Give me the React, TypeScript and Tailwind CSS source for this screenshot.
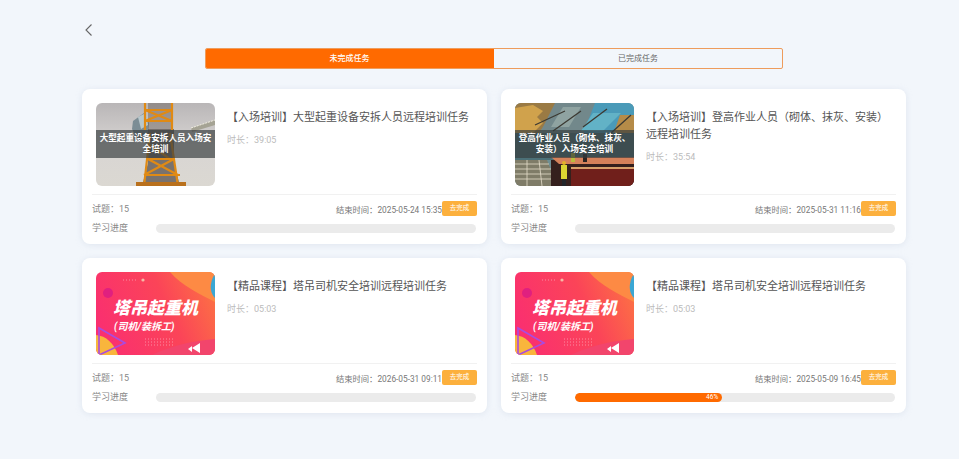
import React from "react";

const font = { fontFamily: 'Roboto, "Noto Sans CJK SC", sans-serif' };

function Crane() {
  return (
    <svg viewBox="0 0 119 83" className="absolute inset-0 w-full h-full" preserveAspectRatio="none">
      <defs>
        <linearGradient id="sky" x1="0" y1="0" x2="0" y2="1">
          <stop offset="0" stopColor="#b9b6b7" />
          <stop offset="0.5" stopColor="#d8d5d3" />
          <stop offset="1" stopColor="#dbd8d2" />
        </linearGradient>
      </defs>
      <rect width="119" height="83" fill="url(#sky)" />
      <path d="M37 18l11-8 5 10-2 20-10-4-5-10z" fill="#7c8d95" />
      <path d="M42 14l8-4 2 12-7 4z" fill="#b8c7cc" />
      <path d="M95 25l24-8v5l-23 7z" fill="#a5a394" />
      <path d="M95 25l24-8" stroke="#f2efe2" strokeWidth="1" strokeDasharray="2 1" />
      <path d="M52 26h26v34l6 23H46l6-23z" fill="#453c38" opacity="0.65" />
      <path d="M52 0h24v26H52z" fill="#5c5048" opacity="0.4" />
      <g stroke="#e08a14" strokeWidth="2.2" fill="none">
        <path d="M49 0v27M76 0v27M48 7h29M48 18h29M49 7l27 11M76 7L49 18" />
        <path d="M54 30l-6 53M74 30l8 53M52 56h26M48 72h36M52 56l30 16M78 56L48 72M54 42l20 14" />
      </g>
      <path d="M40 79h50v4H40z" fill="#b9701c" />
    </svg>
  );
}

function Site() {
  return (
    <svg viewBox="0 0 119 83" className="absolute inset-0 w-full h-full" preserveAspectRatio="none">
      <rect width="119" height="83" fill="#6f8f93" />
      <path d="M0 0h44L24 30H0z" fill="#9a7a44" />
      <path d="M0 5l18-3 10 6-6 6 6 6-12 12H0z" fill="#d0a24c" />
      <path d="M40 0h46L72 32H24z" fill="#72888b" />
      <path d="M48 4h18L54 24H36z" fill="#8fa3a1" />
      <path d="M80 0h39v14L94 36H66z" fill="#4a9ab8" />
      <path d="M78 10h28L88 28H66z" fill="#62b2c6" />
      <path d="M105 12h14v34h-26z" fill="#b58b48" />
      <path d="M20 22l30-14M38 28L66 8M68 24l24-18M96 30l20-18" stroke="#3c3a33" strokeWidth="1.3" />
      <rect y="30" width="119" height="27" fill="#4c7077" />
      <path d="M0 57h32l10 26H0z" fill="#7f7c68" />
      <path d="M0 61h34M0 66h36M0 71h38M0 76h40M12 57v26M24 57l3 26" stroke="#e6decb" strokeWidth="0.8" />
      <path d="M36 57h83v26H36z" fill="#35201d" />
      <path d="M36 54h83v7H44z" fill="#d5815a" />
      <path d="M56 64h63v19H56z" fill="#701f1b" />
      <path d="M56 64h63v2H56z" fill="#d8a06a" />
      <rect x="46" y="62" width="6" height="14" fill="#dcd532" />
      <circle cx="49" cy="60" r="2" fill="#e3b22a" />
      <rect x="47" y="76" width="4" height="7" fill="#22262a" />
      <rect x="56" y="50" width="4" height="9" fill="#b9bb3c" />
      <rect x="68" y="51" width="4" height="8" fill="#2e2522" />
    </svg>
  );
}

function Poster({ id }: { id: string }) {
  return (
    <>
      <svg viewBox="0 0 119 83" className="absolute inset-0 w-full h-full" preserveAspectRatio="none">
        <defs>
          <linearGradient id={id} x1="0" y1="0.6" x2="1" y2="0.3">
            <stop offset="0" stopColor="#fa2f70" />
            <stop offset="0.6" stopColor="#fb4458" />
            <stop offset="1" stopColor="#fc6f45" />
          </linearGradient>
        </defs>
        <rect width="119" height="83" fill={`url(#${id})`} />
        <path d="M74 0h45v30C104 22 86 14 74 0z" fill="#fd8a44" />
        <path d="M119 2v24c-3-3-5-8-4-14 1-5 2-8 4-10z" fill="#3aa7d4" />
        <path d="M56 83c16-8 38-14 63-16v16z" fill="#f2456c" />
        <circle cx="12" cy="21" r="5" fill="#e0207f" />
        <path d="M0 63c10 1 18 8 22 20H0z" fill="#f9b53c" />
        <path d="M3 56l26 15L3 83z" fill="none" stroke="#a94be0" strokeWidth="1.6" />
        <path d="M96 80l-4-3 4-3zM104 81l-8-5 8-5z" fill="#fff" />
        <circle cx="47" cy="8" r="1.6" fill="#f6b9a6" />
        <path d="M27 8h15M49 73h30M49 70h30M49 67h30" stroke="#fff" strokeOpacity="0.7" strokeWidth="0.6" strokeDasharray="1 2" />
      </svg>
      <div className="absolute left-[17px] top-[25px] text-[17px] leading-[22px] font-black italic text-white whitespace-nowrap">
        塔吊起重机
      </div>
      <div className="absolute left-[18px] top-[48px] text-[10px] leading-[13px] font-bold italic text-white whitespace-nowrap">
        (司机/装拆工)
      </div>
    </>
  );
}

type CardP = {
  title: string;
  duration: string;
  end: string;
  img: React.ReactNode;
  overlay?: string;
  progress?: number;
};

function Card({ title, duration, end, img, overlay, progress }: CardP) {
  return (
    <div className="bg-white rounded-[8px] h-[155px] px-[10px] pt-[14px] shadow-[0_1px_6px_rgba(190,200,220,0.35)]">
      <div className="flex h-[92px] pl-[4px] border-b border-[#f1f1f1]">
        <div className="relative w-[119px] h-[83px] rounded-[6px] overflow-hidden shrink-0">
          {img}
          {overlay && (
            <div className="absolute left-0 right-0 top-[27px] h-[28px] bg-[rgba(55,60,62,0.68)] flex items-center justify-center text-center text-white text-[8.6px] leading-[11px] font-bold px-[3px]">
              {overlay}
            </div>
          )}
        </div>
        <div className="ml-[12px] pr-[6px] flex-1 pt-[6px]">
          <div className="text-[11px] leading-[17px] text-[#555]">{title}</div>
          <div className="mt-[8px] text-[9px] leading-[12px] text-[#bbb]">时长：{duration}</div>
        </div>
      </div>
      <div className="flex items-start justify-between h-[20px] pt-[6px]">
        <div className="text-[9px] leading-[14px] text-[#888] mt-[1px]">试题：15</div>
        <div className="flex items-start">
          <div className="text-[8.3px] leading-[14px] text-[#777] mt-[2px]">结束时间：{end}</div>
          <div className="w-[35px] h-[15px] bg-[#fcb03d] rounded-[2px] flex items-center justify-center text-white text-[6.5px]">去完成</div>
        </div>
      </div>
      <div className="flex items-center mt-[6px]">
        <div className="w-[64px] text-[9px] leading-[14px] text-[#888]">学习进度</div>
        <div className="w-[320px] h-[9px] rounded-full bg-[#ebebeb] overflow-hidden">
          {progress !== undefined && (
            <div
              className="h-full rounded-full bg-[#ff6a00] flex items-center justify-end pr-[4px] text-white text-[6.5px] leading-none"
              style={{ width: `${progress}%` }}
            >
              {progress}%
            </div>
          )}
        </div>
      </div>
    </div>
  );
}

export default function App() {
  return (
    <div className="w-[959px] h-[459px] bg-[#f2f6fb] overflow-hidden pl-[82px] pr-[53px]" style={font}>
      <div className="h-[48px] pt-[22px] pl-[1px]">
        <svg width="12" height="16" viewBox="0 0 12 16" fill="none" stroke="#666" strokeWidth="1.1">
          <path d="M8.500 2.500L3 8l5.500 5.500" />
        </svg>
      </div>
      <div className="ml-[123px] w-[578px] h-[21px] flex rounded-[2px] overflow-hidden border border-[#ee9c5c] text-[8px]">
        <div className="w-[289px] -m-px mr-0 bg-[#ff6a00] text-white font-medium flex items-center justify-center">未完成任务</div>
        <div className="flex-1 text-[#666] flex items-center justify-center">已完成任务</div>
      </div>
      <div className="grid grid-cols-[405px_405px] gap-x-[14px] gap-y-[14px] mt-[20px]">
        <Card
          title="【入场培训】大型起重设备安拆人员远程培训任务"
          duration="39:05"
          end="2025-05-24 15:35"
          img={<Crane />}
          overlay="大型起重设备安拆人员入场安全培训"
        />
        <Card
          title="【入场培训】登高作业人员（砌体、抹灰、安装）远程培训任务"
          duration="35:54"
          end="2025-05-31 11:16"
          img={<Site />}
          overlay="登高作业人员（砌体、抹灰、安装）入场安全培训"
        />
        <Card
          title="【精品课程】塔吊司机安全培训远程培训任务"
          duration="05:03"
          end="2026-05-31 09:11"
          img={<Poster id="p1" />}
        />
        <Card
          title="【精品课程】塔吊司机安全培训远程培训任务"
          duration="05:03"
          end="2025-05-09 16:45"
          img={<Poster id="p2" />}
          progress={46}
        />
      </div>
    </div>
  );
}
